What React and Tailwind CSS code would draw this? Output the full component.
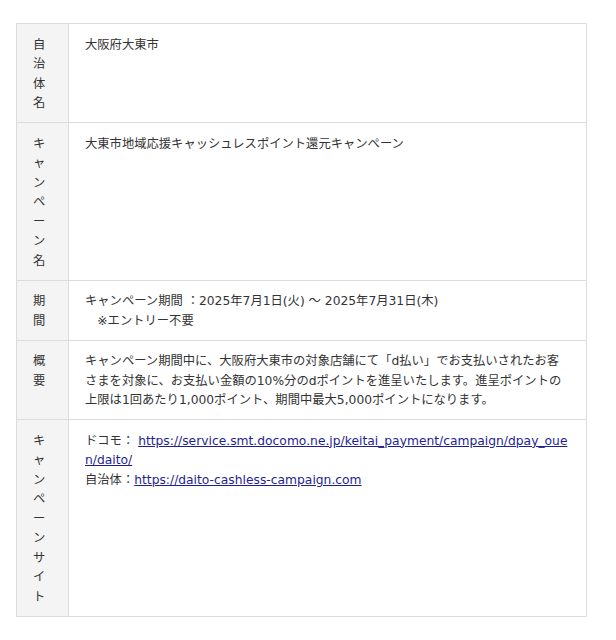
import React from "react";

const rows = [
  {
    label: "自治体名",
    body: <p>大阪府大東市</p>,
  },
  {
    label: "キャンペーン名",
    body: <p>大東市地域応援キャッシュレスポイント還元キャンペーン</p>,
  },
  {
    label: "期間",
    body: (
      <p>
        キャンペーン期間 ：2025年7月1日(火) ～ 2025年7月31日(木)
        <br />
        {"\u3000※エントリー不要"}
      </p>
    ),
  },
  {
    label: "概要",
    body: (
      <p>
        キャンペーン期間中に、大阪府大東市の対象店舗にて「d払い」でお支払いされたお客さまを対象に、お支払い金額の10%分のdポイントを進呈いたします。進呈ポイントの上限は1回あたり1,000ポイント、期間中最大5,000ポイントになります。
      </p>
    ),
  },
  {
    label: "キャンペーンサイト",
    body: (
      <p>
        ドコモ：{" "}
        <a href="#" className="text-[#1f1f8f] underline break-all">
          https://service.smt.docomo.ne.jp/keitai_payment/campaign/dpay_ouen/daito/
        </a>
        <br />
        自治体：
        <a href="#" className="text-[#1f1f8f] underline break-all">
          https://daito-cashless-campaign.com
        </a>
      </p>
    ),
  },
];

const App = () => {
  return (
    <div
      className="min-h-[640px] bg-white pt-[23px] pl-4 text-[12.3px] leading-[19.5px] text-[#333]"
      style={{ fontFamily: '"DejaVu Sans", "Noto Sans CJK JP", sans-serif' }}
    >
      <div className="grid w-[571px] grid-cols-[52px_1fr] border-l border-t border-[#dcdcdc]">
        {rows.map((row) => (
          <React.Fragment key={row.label}>
            <div className="border-b border-r border-[#dcdcdc] bg-[#f4f4f4] px-4 pt-[11.5px] pb-[8.5px]">
              {[...row.label].map((ch, i) => (
                <span key={i} className="block">
                  {ch}
                </span>
              ))}
            </div>
            <div className="border-b border-r border-[#dcdcdc] px-4 pt-[11.5px] pb-[8.5px]">{row.body}</div>
          </React.Fragment>
        ))}
      </div>
    </div>
  );
};

export default App;
